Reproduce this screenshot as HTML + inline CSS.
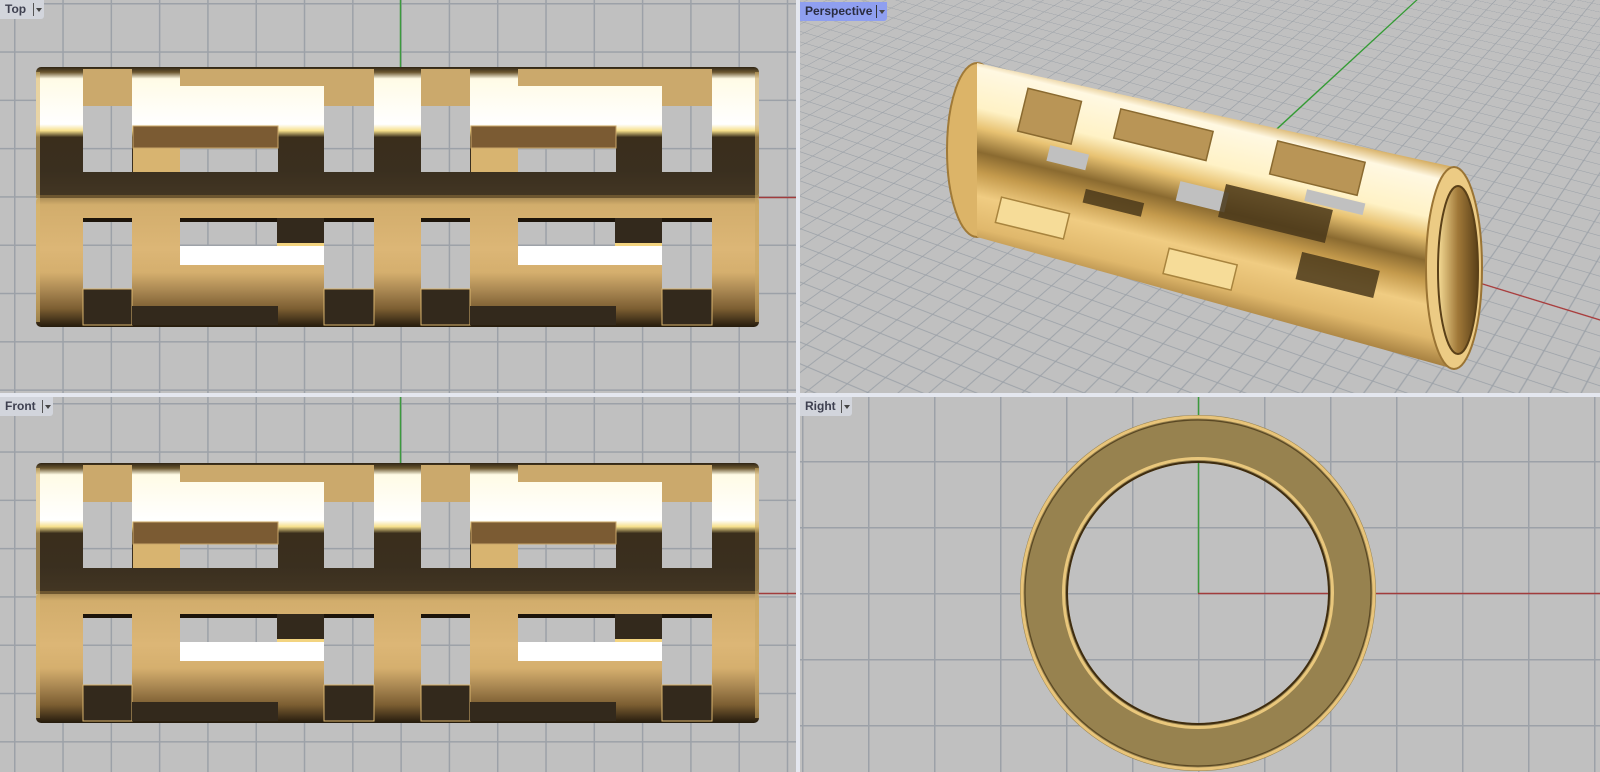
<!DOCTYPE html>
<html><head><meta charset="utf-8">
<style>
html,body{margin:0;padding:0;width:1600px;height:772px;overflow:hidden;}
body{position:relative;background:#e4e7ef;font-family:"Liberation Sans",sans-serif;}
.vp{position:absolute;overflow:hidden;clip-path:inset(0);contain:strict;background-color:#c0c0c0;}
.lbl{position:absolute;left:0;top:0;height:19px;background:#d2d5dc;border-bottom-right-radius:3px;font-size:12px;font-weight:bold;color:#3e4050;line-height:19px;padding-left:5px;box-sizing:border-box;z-index:5}
.lbl .dd{position:absolute;top:3px;width:9px;height:13px;border-left:1px solid #555;}
.lbl .dd:after{content:"";position:absolute;left:2px;top:5px;border-left:3px solid transparent;border-right:3px solid transparent;border-top:4px solid #444;}
.grid48{background-image:linear-gradient(to right,#9ca1a8 0,#9ca1a8 1.5px,transparent 1.5px),linear-gradient(to bottom,#9ca1a8 0,#9ca1a8 1.5px,transparent 1.5px);background-size:48.3px 48.3px;}
</style></head><body>

<svg width="0" height="0" style="position:absolute;left:0;top:0">
<defs>
<linearGradient id="gTop" x1="0" y1="67" x2="0" y2="197" gradientUnits="userSpaceOnUse">
<stop offset="0" stop-color="#2e2414"/><stop offset="0.04" stop-color="#6a5630"/><stop offset="0.09" stop-color="#fffbe6"/><stop offset="0.44" stop-color="#ffffff"/><stop offset="0.49" stop-color="#f6e08c"/><stop offset="0.54" stop-color="#3a2e1c"/><stop offset="0.8" stop-color="#3a2f1f"/><stop offset="1" stop-color="#433623"/>
</linearGradient>
<linearGradient id="gBot" x1="0" y1="197" x2="0" y2="327" gradientUnits="userSpaceOnUse">
<stop offset="0" stop-color="#a88a55"/><stop offset="0.06" stop-color="#d2ad6c"/><stop offset="0.4" stop-color="#dcb676"/><stop offset="0.58" stop-color="#d5af6e"/><stop offset="0.72" stop-color="#a98752"/><stop offset="0.86" stop-color="#7c5e32"/><stop offset="1" stop-color="#241a0c"/>
</linearGradient>
<mask id="holes" maskUnits="userSpaceOnUse" x="0" y="0" width="800" height="400">
<rect x="0" y="0" width="800" height="400" fill="#fff"/>
<g id="holeset" fill="#000">
<rect x="83" y="106" width="49" height="66"/><rect x="180" y="148" width="98" height="24"/><rect x="324" y="106" width="50" height="66"/>
<rect x="83" y="222" width="49" height="67"/><rect x="180" y="222" width="97" height="24"/><rect x="324" y="222" width="50" height="67"/>
</g>
<use href="#holeset" x="338"/>
</mask>
<g id="fills">
<rect x="83" y="69" width="49" height="37" fill="#cba96c"/>
<rect x="180" y="69" width="194" height="17" fill="#cba96c"/>
<rect x="324" y="86" width="50" height="20" fill="#cba96c"/>
<rect x="133" y="148" width="47" height="24" fill="#d8b470"/>
<rect x="133" y="126" width="145" height="22" fill="#7b5b33" stroke="#c9a668" stroke-width="1"/>
<rect x="83" y="218" width="49" height="4" fill="#1c140a"/>
<rect x="180" y="218" width="97" height="4" fill="#1c140a"/>
<rect x="324" y="218" width="50" height="4" fill="#1c140a"/>
<rect x="277" y="218" width="47" height="25" fill="#33291c"/>
<rect x="277" y="243" width="47" height="3" fill="#f3d480"/>
<rect x="180" y="246" width="144" height="19" fill="#ffffff"/>
<rect x="83" y="289" width="49" height="36" fill="#33291c" stroke="#d8b46e" stroke-width="1"/>
<rect x="132" y="306" width="146" height="19" fill="#33291c"/>
<rect x="324" y="289" width="50" height="36" fill="#33291c" stroke="#d8b46e" stroke-width="1"/>
</g>
<g id="tube">
<g mask="url(#holes)">
<rect x="36" y="67" width="723" height="131" rx="5" fill="url(#gTop)"/>
<rect x="36" y="197" width="723" height="130" rx="5" fill="url(#gBot)"/>
<rect x="36" y="195" width="723" height="3" fill="#6d5630"/>
<rect x="36" y="72" width="4" height="250" fill="#d9b86e" opacity="0.6"/>
<rect x="755" y="72" width="4" height="250" fill="#c9a660" opacity="0.6"/>
</g>
<use href="#fills"/>
<use href="#fills" x="338"/>
</g>
</defs>
</svg>

<!-- Top viewport -->
<div class="vp grid48" style="left:0;top:0;width:796px;height:393px;background-position:14px 3px;">
<div class="lbl" style="width:44px;">Top<span class="dd" style="left:33px"></span></div>
<svg width="796" height="393" style="position:absolute;left:0;top:0">
<line x1="400.5" y1="0" x2="400.5" y2="197" stroke="#3c9a3c" stroke-width="1.5"/>
<line x1="400" y1="197.5" x2="796" y2="197.5" stroke="#a23c3c" stroke-width="1.5"/>
<use href="#tube"/>
</svg>
</div>

<!-- Front viewport -->
<div class="vp grid48" style="left:0;top:397px;width:796px;height:375px;background-position:14px 6px;">
<div class="lbl" style="width:53px;">Front<span class="dd" style="left:42px"></span></div>
<svg width="796" height="375" style="position:absolute;left:0;top:0">
<line x1="400.5" y1="0" x2="400.5" y2="197" stroke="#3c9a3c" stroke-width="1.5"/>
<line x1="400" y1="196.5" x2="796" y2="196.5" stroke="#a23c3c" stroke-width="1.5"/>
<use href="#tube" y="-1"/>
</svg>
</div>

<!-- Perspective viewport -->
<div class="vp" style="left:800px;top:0;width:800px;height:393px;perspective:1400px;perspective-origin:400px 196px;">
<div style="position:absolute;left:-398px;top:-2202px;width:1600px;height:2900px;transform-origin:800px 2400px;transform:rotateX(58deg) rotateZ(30deg);background-image:linear-gradient(to right,#9aa0a7 0,#9aa0a7 1.4px,transparent 1.4px),linear-gradient(to bottom,#9aa0a7 0,#9aa0a7 1.4px,transparent 1.4px);background-size:22px 22px;background-position:800px 2400px;">
<div style="position:absolute;left:800px;top:2399px;width:800px;height:2px;background:#a83a3a"></div>
<div style="position:absolute;left:799px;top:0;width:2px;height:2400px;background:#2f9a2f"></div>
</div>
<div class="lbl" style="width:87px;background:#8f9ff0;color:#2a2c40;top:2px;">Perspective<span class="dd" style="left:76px;border-color:#333"></span></div>
<svg width="800" height="393" style="position:absolute;left:0;top:0">
<defs>
<linearGradient id="pb" x1="437" y1="114" x2="391" y2="304" gradientUnits="userSpaceOnUse">
<stop offset="0" stop-color="#d2a858"/><stop offset="0.08" stop-color="#fff8e2"/><stop offset="0.28" stop-color="#fff2c6"/><stop offset="0.38" stop-color="#e8c272"/><stop offset="0.5" stop-color="#8a6a30"/><stop offset="0.6" stop-color="#c49a4c"/><stop offset="0.72" stop-color="#f0cc82"/><stop offset="0.88" stop-color="#e0b86c"/><stop offset="1" stop-color="#a88242"/>
</linearGradient>
<linearGradient id="pin" x1="0" y1="0" x2="1" y2="0">
<stop offset="0" stop-color="#f6dc96"/><stop offset="0.5" stop-color="#a07838"/><stop offset="1" stop-color="#5a4018"/>
</linearGradient>
</defs>
<ellipse cx="177" cy="150" rx="30" ry="87" fill="#dcb468" stroke="#a07a38" stroke-width="2"/>
<polygon points="177,63 654,167 654,369 177,237" fill="url(#pb)"/>
<g transform="translate(177,150) rotate(13.7)">
<g fill="#b99556" stroke="#8a6a30" stroke-width="1.5">
<rect x="35" y="-72" width="55" height="44"/>
<rect x="130" y="-74" width="95" height="30"/>
<rect x="290" y="-80" width="90" height="34"/>
</g>
<g fill="#c0c0c0">
<rect x="70" y="-22" width="40" height="16"/>
<rect x="205" y="-18" width="50" height="20"/>
<rect x="330" y="-40" width="60" height="12"/>
</g>
<g fill="#4a381a" opacity="0.85">
<rect x="250" y="-26" width="110" height="34"/>
<rect x="115" y="12" width="60" height="14"/>
<rect x="340" y="22" width="80" height="28"/>
</g>
<g fill="#f6dc98" stroke="#a8843e" stroke-width="1.5">
<rect x="35" y="40" width="70" height="26"/>
<rect x="210" y="50" width="70" height="26"/>
</g>
</g>
<ellipse cx="654" cy="268" rx="28" ry="101" fill="#eccb84" stroke="#9a7434" stroke-width="2"/>
<ellipse cx="658" cy="270" rx="20" ry="84" fill="url(#pin)" stroke="#5a4018" stroke-width="2"/>
</svg>
</div>

<!-- Right viewport -->
<div class="vp" style="left:800px;top:397px;width:800px;height:375px;background-image:linear-gradient(to right,#9ca1a8 0,#9ca1a8 1.5px,transparent 1.5px),linear-gradient(to bottom,#9ca1a8 0,#9ca1a8 1.5px,transparent 1.5px);background-size:66px 66px;background-position:2px 64px;">
<div class="lbl" style="width:52px;">Right<span class="dd" style="left:41px"></span></div>
<svg width="800" height="375" style="position:absolute;left:0;top:0">
<line x1="398.5" y1="0" x2="398.5" y2="196" stroke="#3c9a3c" stroke-width="1.5"/>
<line x1="398" y1="196.5" x2="800" y2="196.5" stroke="#a23c3c" stroke-width="1.5"/>
<path d="M398,196 m-178,0 a178,178 0 1,0 356,0 a178,178 0 1,0 -356,0 Z M398,196 m-130,0 a130,130 0 1,1 260,0 a130,130 0 1,1 -260,0 Z" fill="#97824f" fill-rule="evenodd"/>
<circle cx="398" cy="196" r="176" fill="none" stroke="#e8c47a" stroke-width="3"/>
<circle cx="398" cy="196" r="173" fill="none" stroke="#4a3818" stroke-width="1.2" opacity="0.8"/>
<circle cx="398" cy="196" r="131" fill="none" stroke="#3e2c10" stroke-width="2"/>
<circle cx="398" cy="196" r="134.5" fill="none" stroke="#e9c77c" stroke-width="3"/>
</svg>
</div>

</body></html>
